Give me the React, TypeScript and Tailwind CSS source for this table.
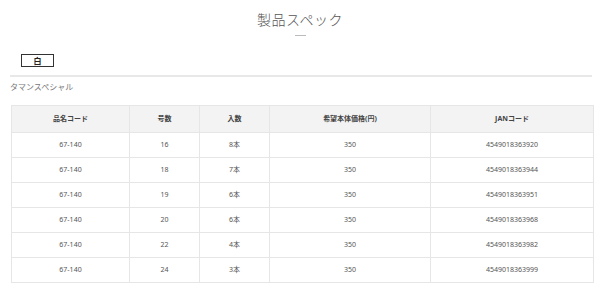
import React from "react";

const rows = [
  { code: "67-140", size: "16", qty: "8本", price: "350", jan: "4549018363920" },
  { code: "67-140", size: "18", qty: "7本", price: "350", jan: "4549018363944" },
  { code: "67-140", size: "19", qty: "6本", price: "350", jan: "4549018363951" },
  { code: "67-140", size: "20", qty: "6本", price: "350", jan: "4549018363968" },
  { code: "67-140", size: "22", qty: "4本", price: "350", jan: "4549018363982" },
  { code: "67-140", size: "24", qty: "3本", price: "350", jan: "4549018363999" },
];

const headers = ["品名コード", "号数", "入数", "希望本体価格(円)", "JANコード"];
const widths = ["w-[118px]", "w-[70px]", "w-[70px]", "w-[161px]", "w-[163px]"];

function App() {
  return (
    <div className="w-[600px] h-[288px] bg-white overflow-hidden font-['Noto_Sans','Noto_Sans_CJK_JP',sans-serif]">
      {/* title */}
      <div className="pt-[11px] flex flex-col items-center">
        <h2 className="text-[14px] leading-[18px] font-light text-[#555] tracking-[0.5px]">
          製品スペック
        </h2>
        <div className="mt-[6px] w-[11px] h-px bg-[#bbb]" />
      </div>

      {/* color tabs */}
      <div className="mt-[18px] ml-[21px]">
        <button className="w-[33px] h-[13px] border border-[#333] flex items-center justify-center text-[8px] leading-none font-bold text-[#222]">
          白
        </button>
      </div>
      <div className="mt-[8px] ml-[10px] mr-[8px] h-[2px] bg-[#e8e8e8]" />

      <p className="mt-[5px] ml-[10px] text-[8px] leading-[10px] text-[#777]">
        タマンスペシャル
      </p>

      {/* spec table */}
      <table className="mt-[13px] ml-[11px] w-[582px] border-collapse table-fixed text-center">
        <thead>
          <tr className="bg-[#f3f3f3]">
            {headers.map((h, i) => (
              <th
                key={h}
                className={`${widths[i]} h-[27px] p-0 border border-[#e6e6e6] text-[7px] font-bold text-[#444]`}
              >
                {h}
              </th>
            ))}
          </tr>
        </thead>
        <tbody>
          {rows.map((r) => (
            <tr key={r.jan}>
              {[r.code, r.size, r.qty, r.price, r.jan].map((v, i) => (
                <td
                  key={i}
                  className="h-[25px] p-0 border border-[#e6e6e6] text-[7px] text-[#555]"
                >
                  {v}
                </td>
              ))}
            </tr>
          ))}
        </tbody>
      </table>
    </div>
  );
}

export default App;
